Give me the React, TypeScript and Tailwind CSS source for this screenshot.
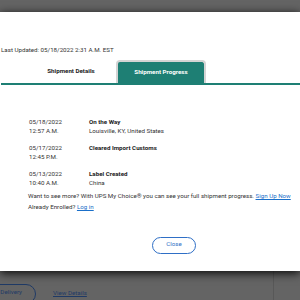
const rows = [
  { date: "05/18/2022", time: "12:57 A.M.", title: "On the Way", place: "Louisville, KY, United States" },
  { date: "05/17/2022", time: "12:45 P.M.", title: "Cleared Import Customs", place: "" },
  { date: "05/13/2022", time: "10:40 A.M.", title: "Label Created", place: "China" },
];

const App = () => {
  return (
    <div
      className="w-[300px] h-[300px] flex flex-col bg-[#646464] overflow-hidden text-[#333333]"
      style={{ fontFamily: "Roboto, 'Liberation Sans', sans-serif" }}
    >
      {/* Overlay top */}
      <div className="h-[12px] shrink-0 bg-[#646464]" />

      {/* Modal */}
      <div className="h-[259px] shrink-0 bg-white relative z-10 shadow-[0_2px_9px_rgba(0,0,0,0.95)] flex flex-col">
        <div className="pt-[34px] pl-[1px] text-[6.2px] leading-[8px] whitespace-nowrap">
          Last Updated: 05/18/2022 2:31 A.M. EST
        </div>

        {/* Tabs */}
        <div className="mt-[6px] ml-[1px] flex items-end">
          <div className="ml-[25px] w-[90px] h-[23px] flex items-center justify-center text-[6.2px] font-bold text-[#222]">
            Shipment Details
          </div>
          <div className="w-[90px] h-[23px] flex items-center justify-center rounded-t-[4px] border-2 border-b-0 border-[#d4d4d4] bg-[#1e7f74] text-[6.2px] font-bold text-white">
            Shipment Progress
          </div>
        </div>
        <div className="ml-[1px] h-[2px] bg-[#1e7f74]" />

        {/* Progress rows */}
        <div className="mt-[33px] pl-[29px] flex flex-col gap-[9px] text-[6.2px] leading-[8.5px]">
          {rows.map((r) => (
            <div key={r.date} className="flex">
              <div className="w-[60px]">
                <div>{r.date}</div>
                <div>{r.time}</div>
              </div>
              <div>
                <div className="font-bold text-[#222]">{r.title}</div>
                <div>{r.place || "\u00a0"}</div>
              </div>
            </div>
          ))}
        </div>

        <div className="mt-[5px] pl-[28px] text-[6.2px] leading-[8.5px] whitespace-nowrap">
          Want to see more? With UPS My Choice® you can see your full shipment progress.{" "}
          <span className="text-[#1a6fc9] underline">Sign Up Now</span>
        </div>
        <div className="mt-[2.5px] pl-[28px] text-[6.2px] leading-[8.5px]">
          Already Enrolled? <span className="text-[#1a6fc9] underline">Log in</span>
        </div>

        <div className="mt-[25px] pl-[152px]">
          <button className="w-[44px] h-[17px] rounded-full border-[1.5px] border-[#2f6fc6] text-[6.2px] text-[#2f6fc6] flex items-center justify-center">
            Close
          </button>
        </div>
      </div>

      {/* Page behind overlay */}
      <div className="flex-1 relative flex items-start">
        <div className="mt-[13px] ml-[-20px] w-[56px] h-[20px] rounded-full border-[1.5px] border-[#1f3a66] text-[6.2px] text-[#1f3a66] flex items-center justify-end pr-[13px] pb-[2px]">
          Delivery
        </div>
        <div className="mt-[18px] ml-[17px] text-[6.2px] text-[#1f3a66] underline">View Details</div>
        <div className="absolute left-[273px] top-0 bottom-0 w-px bg-[#585858]" />
      </div>
    </div>
  );
};

export default App;
